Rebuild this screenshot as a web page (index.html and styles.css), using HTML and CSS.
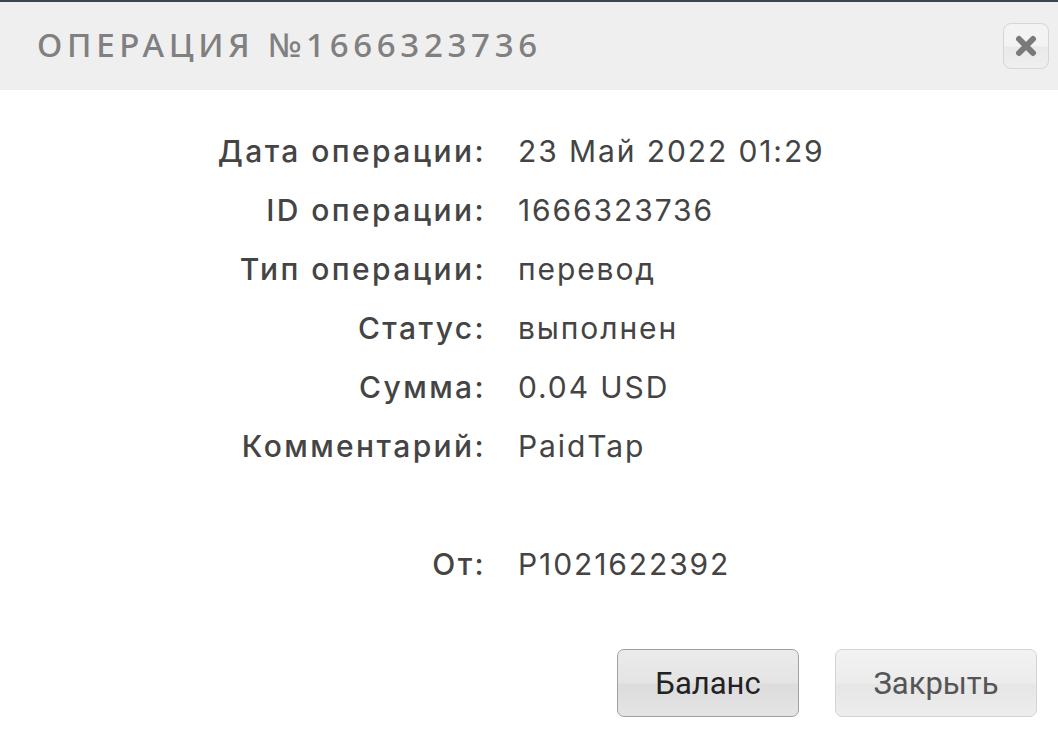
FILE: index.html
```html
<!DOCTYPE html>
<html lang="ru">
<head>
    <meta charset="UTF-8">
    <title>Операция №1666323736</title>
    <link rel="stylesheet" href="styles.css">
</head>
<body>
    <div class="dialog">
        <div class="dialog-header">
            <h1 class="dialog-title">Операция №1666323736</h1>
            <button class="close-btn" title="Закрыть">
                <svg width="22" height="22" viewBox="0 0 22 22">
                    <path d="M4 4 L18 18 M18 4 L4 18" stroke="#7a7a7a" stroke-width="6" stroke-linecap="round"/>
                </svg>
            </button>
        </div>

        <div class="details">
            <div class="label">Дата операции:</div>
            <div class="value">23 Май 2022 01:29</div>

            <div class="label">ID операции:</div>
            <div class="value">1666323736</div>

            <div class="label">Тип операции:</div>
            <div class="value">перевод</div>

            <div class="label">Статус:</div>
            <div class="value">выполнен</div>

            <div class="label">Сумма:</div>
            <div class="value">0.04 USD</div>

            <div class="label">Комментарий:</div>
            <div class="value">PaidTap</div>

            <div class="spacer"></div>

            <div class="label">От:</div>
            <div class="value">P1021622392</div>
        </div>

        <div class="dialog-buttons">
            <button class="btn btn-primary">Баланс</button>
            <button class="btn btn-secondary">Закрыть</button>
        </div>
    </div>
</body>
</html>
```

FILE: styles.css
```css
body {
    margin: 0;
    padding: 0;
    background: #ffffff;
    font-family: Inter, "Noto Sans", sans-serif;
    overflow: hidden;
}

.dialog {
    width: 1058px;
    height: 741px;
    border-top: 2px solid #3c4650;
    box-sizing: border-box;
}

.dialog-header {
    display: flex;
    align-items: center;
    justify-content: space-between;
    height: 88px;
    background: #efefef;
    padding: 0 9px 4px 37px;
    box-sizing: border-box;
}

.dialog-title {
    margin: 0;
    font-family: "Noto Sans", sans-serif;
    font-weight: 500;
    font-size: 33px;
    letter-spacing: 4.7px;
    text-transform: uppercase;
    color: #808080;
}

.close-btn {
    width: 46px;
    height: 46px;
    padding: 0;
    margin-top: 4px;
    display: flex;
    align-items: center;
    justify-content: center;
    border: 1px solid #d6d6d6;
    border-radius: 8px;
    background: linear-gradient(#f3f3f3 0%, #f3f3f3 50%, #e9e9e9 52%, #efefef 100%);
    cursor: pointer;
}

.details {
    display: grid;
    grid-template-columns: 486px 1fr;
    column-gap: 32px;
    grid-auto-rows: 59px;
    align-items: center;
    padding-top: 31px;
    font-size: 30px;
    letter-spacing: 1.9px;
    color: #444;
}

.label {
    text-align: right;
    font-weight: 500;
    letter-spacing: 2.4px;
}

.value {
    font-weight: 400;
}

.spacer {
    grid-column: 1 / 3;
}

.dialog-buttons {
    display: flex;
    justify-content: flex-end;
    gap: 36px;
    padding: 56px 21px 0 0;
}

.btn {
    height: 68px;
    font-family: Roboto, sans-serif;
    font-size: 31px;
    border-radius: 7px;
    cursor: pointer;
}

.btn-primary {
    width: 182px;
    color: #222;
    border: 1px solid #a0a0a0;
    background: linear-gradient(#ebebeb 0%, #e4e4e4 50%, #dcdcdc 52%, #e4e4e4 100%);
}

.btn-secondary {
    width: 202px;
    color: #555;
    border: 1px solid #d4d4d4;
    background: linear-gradient(#f2f2f2 0%, #ececec 50%, #e6e6e6 52%, #ededed 100%);
}
```
